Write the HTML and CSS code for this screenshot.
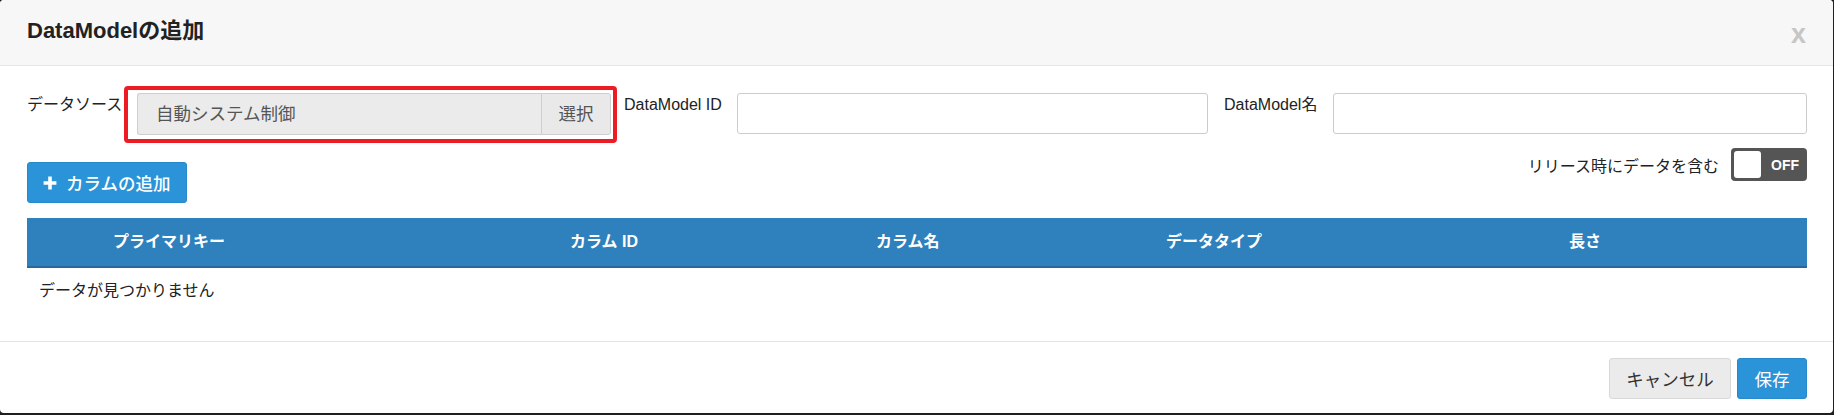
FILE: index.html
```html
<!DOCTYPE html>
<html lang="ja">
<head>
<meta charset="utf-8">
<title>DataModelの追加</title>
<link rel="stylesheet" href="styles.css">
</head>
<body>
<div class="modal">
  <div class="modal-header">
    <h4 class="modal-title">DataModelの追加</h4>
    <span class="close">x</span>
  </div>
  <div class="modal-body">
    <div class="form-row">
      <div class="field f1">
        <label class="lbl lbl1">データソース</label>
        <div class="highlight">
          <div class="input-group">
            <div class="ig-input">自動システム制御</div>
            <div class="ig-btn">選択</div>
          </div>
        </div>
      </div>
      <div class="field f2">
        <label class="lbl lbl2">DataModel ID</label>
        <div class="text-input"></div>
      </div>
      <div class="field f3">
        <label class="lbl lbl3">DataModel名</label>
        <div class="text-input"></div>
      </div>
    </div>
    <div class="action-row">
      <button class="btn btn-primary btn-add">
        <svg class="plus" width="14" height="14" viewBox="0 0 14 14"><path d="M5.2 0.6h3.6v4.6h4.6v3.6h-4.6v4.6h-3.6v-4.6h-4.6v-3.6h4.6z" fill="#fff"/></svg>
        <span>カラムの追加</span>
      </button>
      <div class="toggle-wrap">
        <span class="toggle-label">リリース時にデータを含む</span>
        <div class="toggle"><span class="knob"></span><span class="toggle-text">OFF</span></div>
      </div>
    </div>
    <div class="table">
      <div class="thead">
        <div class="th th1">プライマリキー</div>
        <div class="th">カラム ID</div>
        <div class="th">カラム名</div>
        <div class="th">データタイプ</div>
        <div class="th">長さ</div>
      </div>
      <div class="empty">データが見つかりません</div>
    </div>
  </div>
  <div class="modal-footer">
    <button class="btn btn-default btn-cancel">キャンセル</button>
    <button class="btn btn-primary btn-save">保存</button>
  </div>
</div>
</body>
</html>
```
FILE: styles.css
```css
* { box-sizing: border-box; }
html, body { margin: 0; padding: 0; }
body {
  width: 1834px;
  height: 415px;
  background: #1f1f1f;
  font-family: "Liberation Sans", "Noto Sans CJK JP", sans-serif;
  color: #333;
  overflow: hidden;
}
.modal {
  width: 1833px;
  height: 413px;
  background: #fff;
  border-radius: 4px;
  overflow: hidden;
}
.modal-header {
  height: 66px;
  background: #f7f7f7;
  border-bottom: 1px solid #e5e5e5;
  display: flex;
  align-items: center;
  justify-content: space-between;
  padding: 0 27px 0 27px;
}
.modal-title {
  margin: 0;
  font-size: 22px;
  font-weight: bold;
  color: #222;
  line-height: 1;
  padding-bottom: 3px;
}
.close {
  font-size: 27px;
  font-weight: bold;
  color: #c6c6c6;
  line-height: 1;
  padding-top: 4px;
}
.modal-body {
  height: 275px;
  padding: 20px 26px 0 27px;
}
.form-row {
  display: flex;
  align-items: flex-start;
  height: 57px;
}
.field { display: flex; align-items: flex-start; }
.f1 { width: 590px; margin-right: 7px; }
.f2 { width: 584px; margin-right: 16px; }
.f3 { flex: 1; }
.lbl {
  font-size: 16px;
  line-height: 23px;
  margin-top: 7px;
  color: #222;
  white-space: nowrap;
}
.lbl1 { width: 97px; }
.lbl2 { width: 113px; }
.lbl3 { width: 109px; }
.text-input {
  flex: 1;
  margin-top: 7px;
  height: 41px;
  border: 1px solid #ccc;
  border-radius: 3px;
  background: #fff;
}
.highlight {
  flex: 1;
  border: 4px solid #ed1c24;
  border-radius: 4px;
  padding: 3px 2px 4px 9px;
}
.input-group {
  display: flex;
  height: 42px;
}
.ig-input {
  flex: 1;
  background: #ebebec;
  border: 1px solid #cfcfcf;
  border-right: none;
  border-radius: 3px 0 0 3px;
  padding-left: 18px;
  font-size: 17.5px;
  line-height: 40px;
  color: #555;
}
.ig-btn {
  width: 70px;
  background: #e9e9e9;
  border: 1px solid #cfcfcf;
  border-radius: 0 3px 3px 0;
  text-align: center;
  font-size: 17.5px;
  line-height: 40px;
  color: #555;
}
.action-row {
  margin-top: 5px;
  display: flex;
  justify-content: space-between;
  align-items: flex-start;
}
.btn {
  font-family: "Liberation Sans", "Noto Sans CJK JP", sans-serif;
  font-size: 17.5px;
  height: 41px;
  border-radius: 3px;
  display: inline-flex;
  align-items: center;
  justify-content: center;
  padding: 0;
  cursor: pointer;
}
.btn-primary {
  background: #2b93d8;
  border: 1px solid #2689cc;
  color: #fff;
}
.btn-default {
  background: #ebebeb;
  border: 1px solid #d8d8d8;
  color: #333;
}
.btn-add {
  margin-top: 14px;
  width: 160px;
  justify-content: flex-start;
  padding-left: 15px;
  font-weight: 500;
}
.plus { margin-right: 9px; flex: none; }
.toggle-wrap {
  display: flex;
  align-items: center;
  height: 33px;
}
.toggle-label {
  font-size: 16px;
  color: #222;
  margin-right: 12px;
}
.toggle {
  width: 76px;
  height: 33px;
  background: #555;
  border-radius: 4px;
  display: flex;
  align-items: center;
  padding-left: 3px;
}
.knob {
  width: 27px;
  height: 27px;
  background: #fff;
  border-radius: 3px;
}
.toggle-text {
  flex: 1;
  text-align: center;
  color: #fff;
  font-weight: bold;
  font-size: 14px;
  padding-left: 2px;
}
.table { margin-top: 15px; }
.thead {
  display: grid;
  grid-template-columns: 543px 306px 290px 403px 1fr;
  height: 50px;
  background: #2e81bd;
  border-bottom: 2px solid #27699a;
}
.th {
  color: #fff;
  font-weight: bold;
  font-size: 16px;
  line-height: 48px;
  white-space: nowrap;
}
.th1 { padding-left: 86px; }
.empty {
  padding: 11px 12px;
  font-size: 16px;
  line-height: 23px;
  color: #222;
}
.modal-footer {
  border-top: 1px solid #e5e5e5;
  height: 72px;
  padding: 16px 26px 0 0;
  display: flex;
  justify-content: flex-end;
  align-items: flex-start;
  gap: 6px;
}
.btn-cancel { width: 122px; }
.btn-save { width: 70px; }
```
